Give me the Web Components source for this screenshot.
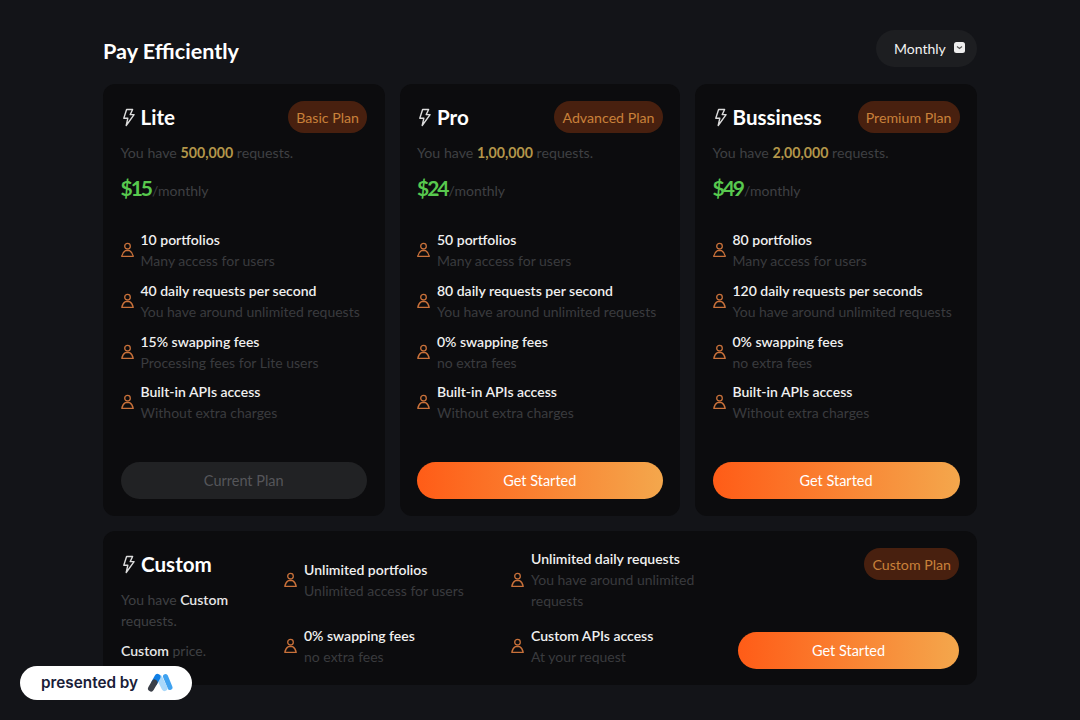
<!doctype html>
<html>
<head>
<meta charset="utf-8">
<style>
  html, body { margin: 0; height: 100%; overflow: hidden; }
  body { background: #131418; color: #fff; font-family: "Lato", "Noto Sans", sans-serif; }
</style>
</head>
<body>

<pricing-page>
  <plan-card name="Lite" badge="Basic Plan" amount="500,000" price="$15" cta="Current Plan" current>
    <plan-feature title="10 portfolios">Many access for users</plan-feature>
    <plan-feature title="40 daily requests per second">You have around unlimited requests</plan-feature>
    <plan-feature title="15% swapping fees">Processing fees for Lite users</plan-feature>
    <plan-feature title="Built-in APIs access">Without extra charges</plan-feature>
  </plan-card>
  <plan-card name="Pro" badge="Advanced Plan" amount="1,00,000" price="$24" cta="Get Started">
    <plan-feature title="50 portfolios">Many access for users</plan-feature>
    <plan-feature title="80 daily requests per second">You have around unlimited requests</plan-feature>
    <plan-feature title="0% swapping fees">no extra fees</plan-feature>
    <plan-feature title="Built-in APIs access">Without extra charges</plan-feature>
  </plan-card>
  <plan-card name="Bussiness" badge="Premium Plan" amount="2,00,000" price="$49" cta="Get Started">
    <plan-feature title="80 portfolios">Many access for users</plan-feature>
    <plan-feature title="120 daily requests per seconds">You have around unlimited requests</plan-feature>
    <plan-feature title="0% swapping fees">no extra fees</plan-feature>
    <plan-feature title="Built-in APIs access">Without extra charges</plan-feature>
  </plan-card>
  <custom-plan slot="custom">
    <plan-feature title="Unlimited portfolios">Unlimited access for users</plan-feature>
    <plan-feature title="Unlimited daily requests">You have around unlimited requests</plan-feature>
    <plan-feature title="0% swapping fees">no extra fees</plan-feature>
    <plan-feature title="Custom APIs access">At your request</plan-feature>
  </custom-plan>
</pricing-page>
<presented-by></presented-by>

<script>
  const boltIcon = `<svg width="15" height="19" viewBox="0 0 15 19" fill="none" stroke="#dcdcdc" stroke-width="1.4" stroke-linejoin="round"><path d="M5.6 1.5h6L9.2 6.6h3.9L5.2 17.5l1.6-7.2H2.8z"/></svg>`;

  class PlanBadge extends HTMLElement {
    connectedCallback() {
      this.attachShadow({ mode: 'open' }).innerHTML = `
        <style>
          :host { display: inline-flex; align-items: center; height: 32px; padding: 0 8px; border-radius: 16px;
            background: #48200f; color: #c9813a; font-size: 14.2px; white-space: nowrap; }
        </style><slot></slot>`;
    }
  }

  class CtaButton extends HTMLElement {
    connectedCallback() {
      this.attachShadow({ mode: 'open' }).innerHTML = `
        <style>
          :host { display: flex; align-items: center; justify-content: center; height: 37px; border-radius: 19px;
            background: linear-gradient(90deg, #ff5c17, #f4a74c); color: #fff; font-size: 14.5px; }
          :host([current]) { background: #212224; color: #55565a; }
        </style><slot></slot>`;
    }
  }

  class PlanFeature extends HTMLElement {
    connectedCallback() {
      const title = this.getAttribute('title');
      this.attachShadow({ mode: 'open' }).innerHTML = `
        <style>
          :host { display: flex; align-items: center; gap: 7px; font-size: 14px; line-height: 21px; }
          svg { flex: none; }
          .title { color: #f0f0f0; font-weight: 600; }
          .sub { color: #3a3b3e; }
        </style>
        <svg width="13" height="16" viewBox="0 0 13 16" fill="none" stroke="#c9713a" stroke-width="1.3">
          <circle cx="6.5" cy="4.2" r="2.8"/>
          <path d="M4.4 8.6C2.6 9.6 1.2 11.8.8 14.4h11.4c-.4-2.6-1.8-4.8-3.6-5.8z" stroke-linejoin="round"/>
        </svg>
        <div><div class="title"></div><div class="sub"><slot></slot></div></div>`;
      this.shadowRoot.querySelector('.title').textContent = title;
    }
  }

  class PlanCard extends HTMLElement {
    connectedCallback() {
      const attr = n => this.getAttribute(n);
      const current = this.hasAttribute('current') ? 'current' : '';
      this.attachShadow({ mode: 'open' }).innerHTML = `
        <style>
          :host { display: flex; flex-direction: column; padding: 17px 17.5px; height: 432px; box-sizing: border-box;
            background: #0c0c0e; border-radius: 12px; font-size: 14.2px; }
          header { display: flex; justify-content: space-between; align-items: center; height: 32px; }
          .name { display: flex; align-items: center; gap: 5px; font-size: 20.6px; font-weight: 700; color: #fff; }
          .have { margin-top: 9px; line-height: 21px; color: #3f4043; }
          .have b { color: #b3964a; font-weight: 700; }
          .price { margin-top: 10px; height: 30px; line-height: 30px; color: #3f4043; font-size: 14px; }
          .price b { color: #58c94e; font-size: 21px; font-weight: 700; letter-spacing: -2px; margin-right: 1px; }
          .features { margin-top: 26px; display: flex; flex-direction: column; gap: 8.8px; }
          cta-button { margin-top: auto; }
        </style>
        <header>
          <span class="name">${boltIcon}<span>${attr('name')}</span></span>
          <plan-badge>${attr('badge')}</plan-badge>
        </header>
        <div class="have">You have <b>${attr('amount')}</b> requests.</div>
        <div class="price"><b>${attr('price')}</b>/monthly</div>
        <div class="features"><slot></slot></div>
        <cta-button ${current}>${attr('cta')}</cta-button>`;
    }
  }

  class CustomPlan extends HTMLElement {
    connectedCallback() {
      this.attachShadow({ mode: 'open' }).innerHTML = `
        <style>
          :host { display: grid; grid-template-columns: 148px 439px 221px; column-gap: 15px; height: 154px; box-sizing: border-box;
            padding: 17px 18px 16px; background: #0c0c0e; border-radius: 12px; font-size: 14px; line-height: 21px; }
          .name { display: flex; align-items: center; gap: 5px; height: 32px; font-size: 20.6px; font-weight: 700; color: #fff; }
          .left { color: #3f4043; }
          .left p { margin: 9px 0 0; }
          .left b { color: #e6e6e6; font-weight: 600; }
          .features { display: grid; grid-template-columns: 212px 212px; gap: 14px 15px; align-content: start; }
          .side { display: flex; flex-direction: column; justify-content: space-between; align-items: flex-end; }
          cta-button { align-self: stretch; }
        </style>
        <div class="left">
          <div class="name">${boltIcon}<span>Custom</span></div>
          <p>You have <b>Custom</b> requests.</p>
          <p><b>Custom</b> price.</p>
        </div>
        <div class="features"><slot></slot></div>
        <div class="side">
          <plan-badge>Custom Plan</plan-badge>
          <cta-button>Get Started</cta-button>
        </div>`;
    }
  }

  class PeriodPicker extends HTMLElement {
    connectedCallback() {
      this.attachShadow({ mode: 'open' }).innerHTML = `
        <style>
          :host { display: inline-flex; align-items: center; gap: 8px; height: 37px; width: 101px; box-sizing: border-box;
            padding-left: 18px; border-radius: 19px; background: #1d1e21; color: #f2f2f2; font-size: 14px; }
          svg { margin-top: -2px; }
        </style>
        <span>Monthly</span>
        <svg width="11" height="11" viewBox="0 0 11 11"><rect width="11" height="11" rx="2.5" fill="#eee"/><path d="M3 4.5l2.5 2 2.5-2" fill="none" stroke="#555" stroke-width="1.2"/></svg>`;
    }
  }

  class PricingPage extends HTMLElement {
    connectedCallback() {
      this.attachShadow({ mode: 'open' }).innerHTML = `
        <style>
          :host { display: block; width: 874px; margin: 0 auto; padding-top: 30px; }
          header { display: flex; justify-content: space-between; align-items: flex-start; height: 38px; margin-bottom: 16px; }
          h1 { margin: 8px 0 0; font-size: 21.6px; line-height: 27px; font-weight: 700; color: #fff; }
          .plans { display: grid; grid-template-columns: 281.5px 280.5px 282px; gap: 15px; }
          .custom { margin-top: 15px; }
        </style>
        <header><h1>Pay Efficiently</h1><period-picker></period-picker></header>
        <div class="plans"><slot></slot></div>
        <div class="custom"><slot name="custom"></slot></div>`;
    }
  }

  class PresentedBy extends HTMLElement {
    connectedCallback() {
      this.attachShadow({ mode: 'open' }).innerHTML = `
        <style>
          :host { position: fixed; left: 20px; top: 666px; width: 172px; height: 34px; box-sizing: border-box; padding-left: 21px;
            display: flex; align-items: center; gap: 8px; background: #fff; border-radius: 17px;
            color: #1a2038; font-family: "Inter", sans-serif; font-size: 15.3px; font-weight: 600; }
          span { margin-top: -1px; }
        </style>
        <span>presented by</span>
        <svg width="27" height="20" viewBox="0 0 27 20">
          <path d="M19.5 3.5l4.5 11" stroke="#3fa2f0" stroke-width="5" stroke-linecap="round"/>
          <path d="M13.5 5l5 10" stroke="#a9d8fa" stroke-width="6" stroke-linecap="round"/>
          <path d="M11.5 4L8.5 9.5" stroke="#0f7fe6" stroke-width="6" stroke-linecap="round"/>
          <path d="M8.5 9.5L5 15.5" stroke="#3b3f48" stroke-width="6" stroke-linecap="round"/>
        </svg>`;
    }
  }

  customElements.define('plan-badge', PlanBadge);
  customElements.define('cta-button', CtaButton);
  customElements.define('plan-feature', PlanFeature);
  customElements.define('plan-card', PlanCard);
  customElements.define('custom-plan', CustomPlan);
  customElements.define('period-picker', PeriodPicker);
  customElements.define('pricing-page', PricingPage);
  customElements.define('presented-by', PresentedBy);
</script>
</body>
</html>
